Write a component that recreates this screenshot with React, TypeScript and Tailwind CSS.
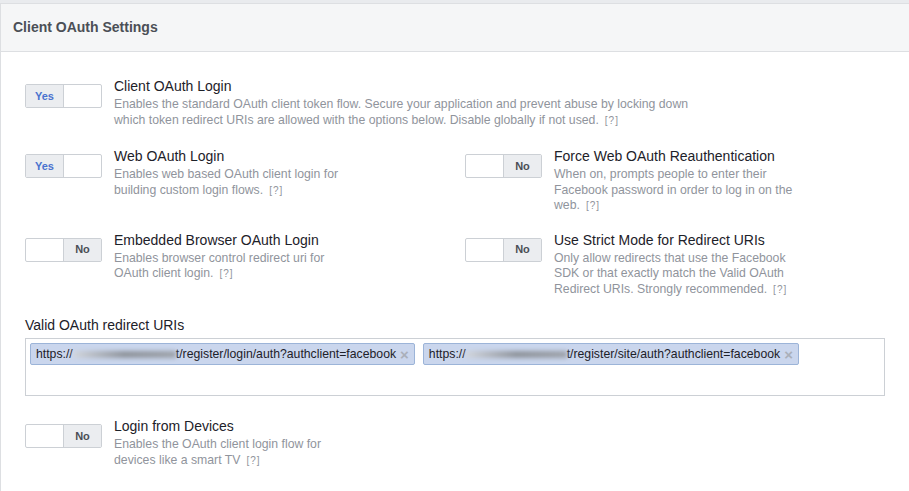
import React from "react";

function Toggle({ on }: { on: boolean }) {
  return (
    <div className="mt-[7px] flex h-[24px] w-[77px] shrink-0 overflow-hidden rounded-[2px] border border-[#ccd0d5] bg-white text-[11px] font-bold">
      {on ? (
        <>
          <div className="flex w-[38px] items-center justify-center border-r border-[#ccd0d5] bg-[#ebedf0] text-[#4a72cf]">
            Yes
          </div>
          <div className="flex-1" />
        </>
      ) : (
        <>
          <div className="w-[38px] border-r border-[#ccd0d5]" />
          <div className="flex flex-1 items-center justify-center bg-[#ebedf0] text-[#4b4f56]">
            No
          </div>
        </>
      )}
    </div>
  );
}

function Help() {
  return <span className="ml-[6px] text-[10px] tracking-[1px] text-[#90949c]">[?]</span>;
}

function Setting({
  on,
  title,
  desc,
  wide,
}: {
  on: boolean;
  title: string;
  desc: string;
  wide?: boolean;
}) {
  return (
    <div className="flex items-start gap-[12px]">
      <Toggle on={on} />
      <div className={wide ? "w-[590px]" : "w-[242px]"}>
        <div className="text-[14px] leading-[18px] text-[#1d2129]">{title}</div>
        <div className="mt-[2px] text-[12.25px] leading-[15.5px] text-[#90949c]">
          {desc}
          <Help />
        </div>
      </div>
    </div>
  );
}

function Token({ blurW, rest }: { blurW: number; rest: string }) {
  return (
    <div className="flex h-[22px] items-center rounded-[2px] border border-[#9cb4d8] bg-[#cad6ed] pl-[5px] pr-[5px] text-[12.25px] text-[#1d2129]">
      <span>https://</span>
      <span
        className="inline-block h-[7px] bg-linear-to-r from-[#d2d6dd] via-[#8f949c] to-[#9ea3ab] blur-[2px]"
        style={{ width: blurW }}
      />
      <span>{rest}</span>
      <span className="ml-[4px] text-[15px] font-bold leading-none text-[#aab0ba]">×</span>
    </div>
  );
}

export default function App() {
  return (
    <div className="min-h-[491px] bg-[#e9ebee] pt-[3px] font-['Liberation_Sans',Arial,sans-serif]">
      <div className="border border-r-0 border-[#dddfe2] bg-white">
        <div className="flex h-[48px] items-center border-b border-[#dddfe2] bg-[#f5f6f7] px-[12px] text-[14px] font-bold text-[#4b4f56]">
          Client OAuth Settings
        </div>

        <div className="px-[24px] pb-[24px] pt-[25px]">
          <Setting
            on
            wide
            title="Client OAuth Login"
            desc="Enables the standard OAuth client token flow. Secure your application and prevent abuse by locking down which token redirect URIs are allowed with the options below. Disable globally if not used."
          />

          <div className="mt-[19px] grid grid-cols-2 gap-x-[20px] gap-y-[17px]">
            <Setting
              on
              title="Web OAuth Login"
              desc="Enables web based OAuth client login for building custom login flows."
            />
            <Setting
              on={false}
              title="Force Web OAuth Reauthentication"
              desc="When on, prompts people to enter their Facebook password in order to log in on the web."
            />
            <Setting
              on={false}
              title="Embedded Browser OAuth Login"
              desc="Enables browser control redirect uri for OAuth client login."
            />
            <Setting
              on={false}
              title="Use Strict Mode for Redirect URIs"
              desc="Only allow redirects that use the Facebook SDK or that exactly match the Valid OAuth Redirect URIs. Strongly recommended."
            />
          </div>

          <div className="mt-[19px] text-[14px] leading-[18px] text-[#1d2129]">
            Valid OAuth redirect URIs
          </div>
          <div className="mt-[4px] flex h-[58px] items-start gap-[8px] border border-[#ccd0d5] p-[4px]">
            <Token blurW={103} rest="t/register/login/auth?authclient=facebook" />
            <Token blurW={101} rest="t/register/site/auth?authclient=facebook" />
          </div>

          <div className="mt-[21px]">
            <Setting
              on={false}
              title="Login from Devices"
              desc="Enables the OAuth client login flow for devices like a smart TV"
            />
          </div>
        </div>
      </div>
    </div>
  );
}
